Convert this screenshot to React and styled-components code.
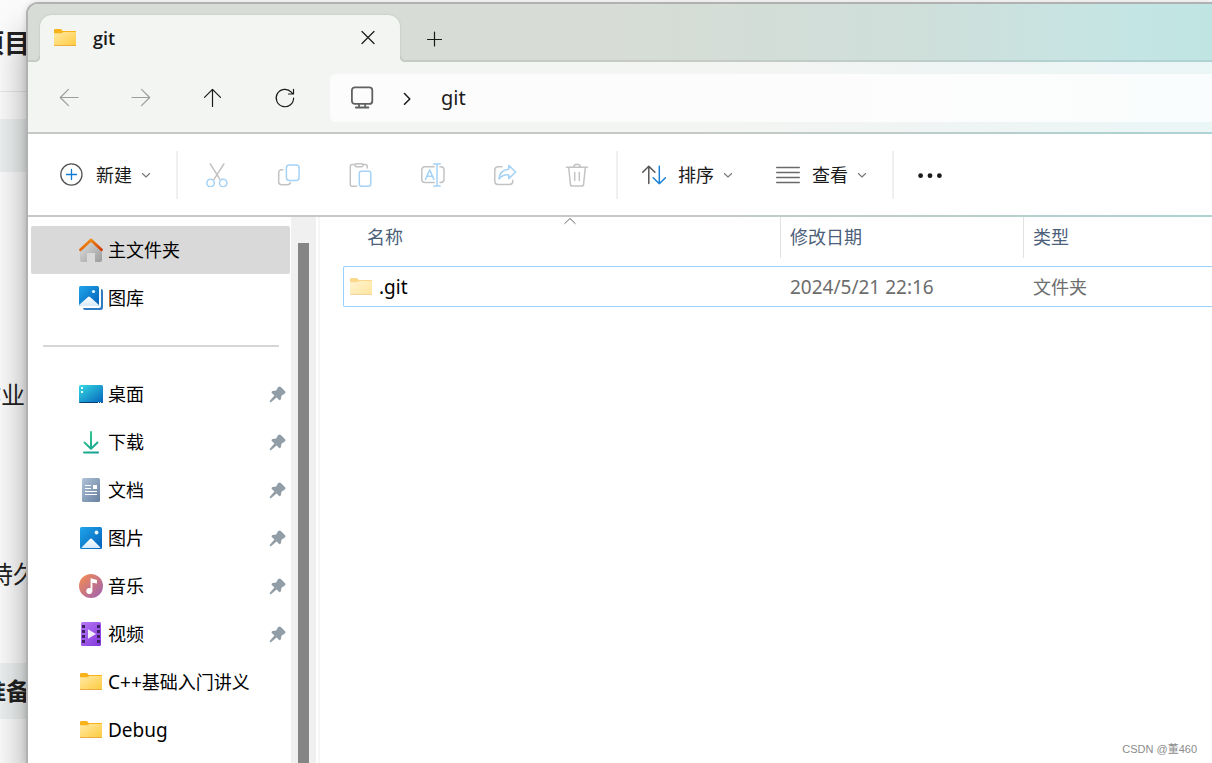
import React from "react";
import styled, { createGlobalStyle, css } from "styled-components";

const Global = createGlobalStyle`
  *, *::before, *::after { box-sizing: border-box; }
  body {
    margin: 0;
    overflow: hidden;
    font-family: "Noto Sans", "Noto Sans CJK SC", sans-serif;
    font-size: 18px;
    line-height: 24px;
    color: #1a1a1a;
  }
`;

const edgeLine =
  "linear-gradient(90deg, #c6cac5 0%, #c6cac5 55%, #bccdc9 76%, #afd2d1 92%, #aed3d2 100%)";

const Desktop = styled.div`
  position: relative;
  height: 100vh;
  padding: 2px 0 0 26px;
  overflow: hidden;
  background: #fbfbfb;
`;

/* The document that shows behind the explorer window */
const BackPage = styled.div`
  position: absolute;
  inset: 0 auto 0 0;
  width: 40px;
  display: flex;
  flex-direction: column;
  overflow: hidden;
`;

const BackRow = styled.div`
  flex: none;
  display: flex;
  align-items: center;
  justify-content: flex-end;
  height: ${(p) => p.$height}px;
  padding: 0 ${(p) => p.$end || 0}px ${(p) => (p.$line ? 6 : 0)}px 0;
  background: ${(p) => (p.$band ? "#edf0f0" : "transparent")};
  border-bottom: ${(p) => (p.$line ? "1px solid #e6e6e6" : "0")};
  font-size: ${(p) => (p.$title ? 26 : 24)}px;
  font-weight: ${(p) => (p.$bold ? 700 : 400)};
  white-space: nowrap;
  color: #222;
`;

const Window = styled.div`
  position: relative;
  height: 100%;
  display: flex;
  flex-direction: column;
  border: 2px solid #b0b1b0;
  border-right: 0;
  border-bottom: 0;
  border-radius: 12px 0 0 0;
  background: #fff;
  box-shadow: 0 30px 36px rgba(0, 0, 0, 0.36), 0 0 6px rgba(0, 0, 0, 0.12);
  overflow: hidden;
`;

const TitleBar = styled.header`
  flex: none;
  display: flex;
  height: 58px;
  padding: 11px 0 0 12px;
  background:
    ${edgeLine} bottom / 100% 2px no-repeat,
    linear-gradient(90deg, #d7dcd6 0%, #d7dcd6 50%, #cfdfda 75%, #c8e3e1 87%, #c3e5e4 94%, #bfe5e3 100%);
`;

const Tab = styled.div`
  position: relative;
  display: flex;
  align-items: center;
  width: 360px;
  padding: 0 16px 2px 13px;
  border-radius: 12px 12px 0 0;
  background: #f3f5f2;
  box-shadow: 0 0 1px 1px #ccd1cb;
  clip-path: inset(-2px -10px 0 -10px);
  font-family: "Open Sans", "Noto Sans CJK SC", sans-serif;
  font-weight: 600;

  &::before, &::after {
    content: "";
    position: absolute;
    bottom: 0;
    width: 6px;
    height: 6px;
  }
  &::before {
    left: -6px;
    background: radial-gradient(circle at 0 0, #d7dcd6 4px, #c6cac5 5px, #c6cac5 6px, #f3f5f2 7px);
  }
  &::after {
    right: -6px;
    background: radial-gradient(circle at 100% 0, #d7dcd6 4px, #c6cac5 5px, #c6cac5 6px, #f3f5f2 7px);
  }
`;

const TabName = styled.span`
  flex: 1;
  padding-left: 16px;
`;

const PlainButton = styled.button`
  display: flex;
  align-items: center;
  justify-content: center;
  padding: 0;
  border: 0;
  background: none;
  font: inherit;
  color: inherit;
`;

const SquareButton = styled(PlainButton)`
  flex: none;
  width: ${(p) => (p.$small ? 32 : 48)}px;
  height: ${(p) => (p.$small ? 32 : 48)}px;
`;

const NewTab = styled(SquareButton)`
  margin-left: 10px;
`;

const NavBar = styled.nav`
  flex: none;
  display: flex;
  gap: 24px;
  height: 72px;
  padding: 12px 0 12px 17px;
  background:
    ${edgeLine} bottom / 100% 2px no-repeat,
    linear-gradient(90deg, #f3f5f2 0%, #f3f5f2 60%, #eff4f4 78%, #ebf6f6 100%);
`;

const Address = styled.div`
  flex: 1;
  display: flex;
  align-items: center;
  margin-left: -3px;
  padding-left: 20px;
  border-radius: 6px 0 0 6px;
  background: linear-gradient(90deg, #fcfcfc 60%, #fbfdfc 86%, #f9fdfe 100%);
  font-size: 20px;
`;

const Crumb = styled(PlainButton)`
  height: 48px;
`;

const CrumbArrow = styled.span`
  display: flex;
  width: 67px;
  justify-content: center;
`;

const ToolBar = styled.div`
  flex: none;
  display: flex;
  align-items: center;
  height: 83px;
  padding: 0 0 2px 20px;
  background: ${edgeLine} bottom / 100% 2px no-repeat, #fff;
`;

const LabelButton = styled(PlainButton)`
  flex: none;
  height: 48px;
  padding: 0 12px;
`;

const ButtonText = styled.span`
  margin: 0 8px 0 12px;
`;

const Divider = styled.div`
  flex: none;
  width: 2px;
  height: 48px;
  margin: 0 12px;
  background: #efefef;
`;

const IconGroup = styled.div`
  flex: none;
  display: flex;
  gap: 24px;
  padding: 0 3px;
`;

const MenuGroup = styled.div`
  flex: none;
  display: flex;
  gap: 18px;
`;

const Body = styled.div`
  flex: 1;
  min-height: 0;
  display: flex;
`;

const Sidebar = styled.aside`
  flex: none;
  width: 263px;
  padding: 9px 1px 0 3px;
  overflow: hidden;
  color: #000;
`;

const Place = styled.a`
  display: flex;
  align-items: center;
  height: 48px;
  padding: 0 4px 0 48px;
  border-radius: 2px;
  color: inherit;
  text-decoration: none;
  ${(p) => p.$active && css`background: #d9d9d9;`}
`;

const PlaceName = styled.span`
  flex: 1;
  padding-left: 5px;
  white-space: nowrap;
`;

const Latin = styled.span`
  font-size: 19px;
`;

const Separator = styled.hr`
  height: 2px;
  margin: 23px 11px 23px 12px;
  border: 0;
  background: #d6d6d6;
`;

const ScrollTrack = styled.div`
  flex: none;
  display: flex;
  width: 25px;
  padding: 26px 7px 0;
  background: #f0f0f0;
`;

const ScrollThumb = styled.div`
  width: 11px;
  background: #858585;
`;

const FilePane = styled.main`
  flex: 1;
  min-width: 0;
  margin-left: 2px;
  padding-left: 23px;
  border-left: 2px solid #f6f6f6;
`;

const FileTable = styled.table`
  width: 100%;
  table-layout: fixed;
  border-collapse: separate;
  border-spacing: 0;
`;

const HeadCell = styled.th`
  position: relative;
  width: ${(p) => p.$width || "auto"};
  padding: 0 0 8px;
  text-align: left;
  font-weight: 400;
  color: #4c607a;
`;

const HeadLabel = styled.div`
  height: 41px;
  padding: 8px 0 0 ${(p) => (p.$first ? 24 : 9)}px;
  border-left: ${(p) => (p.$first ? "0" : "1px solid #e2e2e2")};
`;

const SortMark = styled.span`
  position: absolute;
  top: 0;
  left: 16px;
  right: 0;
  display: flex;
  justify-content: center;
`;

const Cell = styled.td`
  height: 41px;
  padding: 0 0 0 10px;
  border: solid #99d1ff;
  border-width: 1px 0;
  color: #6d6d6d;
  ${(p) => p.$first && css`
    padding-left: 5px;
    border-left-width: 1px;
    border-radius: 2px 0 0 2px;
    color: #000;
  `}
`;

const FileName = styled.div`
  display: flex;
  align-items: center;
  gap: 6px;
`;

const Watermark = styled.div`
  position: absolute;
  right: 15px;
  bottom: 6px;
  font: 11px/16px "Liberation Sans", "Noto Sans CJK SC", sans-serif;
  color: #8c8c8c;
`;

const Svg = ({ w = 24, h = w, children, stroke = "#1a1a1a", sw = 1.5 }) => (
  <svg width={w} height={h} viewBox={`0 0 ${w} ${h}`} fill="none" stroke={stroke} strokeWidth={sw}
    strokeLinecap="round" strokeLinejoin="round" aria-hidden="true">
    {children}
  </svg>
);

const GREY = "#c3c3c3";
const BLUE = "#a5d2f5";

const Back = () => <Svg stroke="#9c9e9b" sw={1.2}><path d="M21 11.500H3.5M11.5 3.300 3.300 11.500l8.200 8.200" /></Svg>;
const Forward = () => <Svg stroke="#9c9e9b" sw={1.2}><path d="M3 11.500h17.5M12.5 3.300l8.200 8.200-8.200 8.200" /></Svg>;
const Up = () => <Svg sw={1.2}><path d="M11.500 20.500V3.300M3.500 11.300l8-8 8 8" /></Svg>;
const Reload = () => <Svg sw={1.2}><path d="M20.600 12a8.700 8.700 0 1 1-2.300-5.900l1.500 1.700M20.500 3.300v4.700h-5" /></Svg>;
const Close = () => <Svg w={16} sw={1.2}><path d="M2 1.500l12 12M14 1.500l-12 12" /></Svg>;
const Plus = () => <Svg w={16} sw={1.2}><path d="M8.500 1v14M1.500 8.500h14" /></Svg>;
const Monitor = () => (
  <Svg stroke="#5f6160" sw={1.8}>
    <rect x="1.9" y="1.300" width="20.400" height="16.600" rx="3" />
    <path d="M9 18v3M15.200 18v3M5.800 21.500h12.600" />
  </Svg>
);
const Chevron = () => <Svg w={12} h={14} sw={1.5}><path d="M2.500 2.500 7.800 8l-5.300 5.300" /></Svg>;
const Caret = () => <Svg w={12} stroke="#777" sw={1.1}><path d="M2.400 4.500 6 8l3.600-3.500" /></Svg>;
const NewIcon = () => (
  <Svg sw={1.3}><circle cx="11.400" cy="11.500" r="10.600" stroke="#555" /><path d="M11.500 6.500v10M6.500 11.500h10" stroke="#0f7ad4" sw={1.600} /></Svg>
);
const Cut = () => (
  <Svg stroke={GREY}>
    <path d="M5.300 1 15 16.400M18.800 1 9 16.400" />
    <g stroke={BLUE}><circle cx="5.600" cy="20" r="3.700" /><circle cx="18.200" cy="20" r="3.700" /></g>
  </Svg>
);
const Copy = () => (
  <Svg stroke={GREY}>
    <path d="M6 6.700H4.700a3 3 0 0 0-3 3v9a3 3 0 0 0 3 3h5.800a3 3 0 0 0 2.900-2.200" />
    <rect x="9.400" y="2" width="12.700" height="15.600" rx="3" stroke={BLUE} />
  </Svg>
);
const Paste = () => (
  <Svg stroke={GREY}>
    <path d="M6.300 2H3.500A1.800 1.800 0 0 0 1.700 3.800v18.200a1.800 1.800 0 0 0 1.800 1.800H8M15 2h1.800a1.800 1.800 0 0 1 1.800 1.800V5.500" transform="translate(-.4 -.5)" />
    <rect x="6" y=".8" width="8" height="3" rx="1.500" />
    <rect x="10.300" y="8.300" width="11.500" height="15" rx="2" stroke={BLUE} />
  </Svg>
);
const Rename = () => (
  <Svg stroke={GREY}>
    <path d="M13.200 3.700H4A3.200 3.200 0 0 0 .8 6.900v9.400a3.200 3.200 0 0 0 3.200 3.200h9.200M19 3.700h.8A3.200 3.200 0 0 1 23 6.900v9.400a3.200 3.200 0 0 1-3.200 3.200H19" />
    <path d="M4.500 16.400 8.700 6.900l4.200 9.500M6 13.200h5.500M16 1v22M12.800 1h6.400M12.800 23h6.400" stroke={BLUE} />
  </Svg>
);
const Share = () => (
  <Svg stroke={GREY}>
    <path d="M9 3.700H5A3.200 3.200 0 0 0 1.800 6.900v11.400A3.200 3.200 0 0 0 5 21.500h11.600a3.200 3.200 0 0 0 3.200-3.200v-1" />
    <path d="M15.800 2.400l6.900 6.600-6.900 6.600v-3.700c-4-.3-7.200.9-9.900 4.100.5-5.500 3.600-9.200 9.900-9.800z" stroke={BLUE} />
  </Svg>
);
const Trash = () => (
  <Svg stroke={GREY}>
    <path d="M1.500 4.300h21M3.700 4.500l1.700 16.600a2 2 0 0 0 2 1.900h9.200a2 2 0 0 0 2-1.900l1.700-16.600M8.600 4a3.500 3.500 0 0 1 6.800 0M9.700 9.500v8M14.300 9.500v8" />
  </Svg>
);
const Sort = () => (
  <Svg stroke="#555">
    <path d="M6.800 20.500V3.300M.7 9.300l6.100-6.100 6.100 6.100" />
    <path d="M17.300 3.300v17.400M11.200 14.700l6.100 6.100 6.100-6.100" stroke="#1b80d6" />
  </Svg>
);
const View = () => <Svg stroke="#6a6a6a" sw={1.4}><path d="M.7 4.500h22.600M.7 9.500h22.600M.7 14.500h22.600M.7 19.500h22.600" /></Svg>;
const More = () => (
  <Svg stroke="none"><g fill="#1a1a1a"><circle cx="2.600" cy="12.700" r="2.400" /><circle cx="12" cy="12.700" r="2.400" /><circle cx="21.400" cy="12.700" r="2.400" /></g></Svg>
);
const SortUp = () => <Svg w={12} h={8} stroke="#666" sw={1}><path d="M.8 6.500 6 1.500l5.200 5" /></Svg>;

const Pin = () => (
  <svg width="17" height="17" viewBox="0 0 17 17" aria-hidden="true">
    <path d="M9 1.300Q10.300-.3 11.800 1l4 3.900q1.400 1.300 0 2.600l-3.300 2.200-.6 3.300q-.6 2.200-2.300.6L7.500 11.500l-4.900 4.300-2 .7.500-2 4.300-4.900-2.200-2.200Q1.700 5.700 3.700 5.100l3.500-.7z" fill="#929ea7" />
  </svg>
);

const Gradients = () => (
  <svg width="0" height="0" style={{ position: "absolute" }} aria-hidden="true">
    <defs>
      <linearGradient id="folder" x1="0" y1="0" x2="1" y2="1"><stop stopColor="#ffe9a6" /><stop offset="1" stopColor="#ffcb3d" /></linearGradient>
      <linearGradient id="roof" x1="0" y1="0" x2="1" y2="1"><stop stopColor="#f99a10" /><stop offset="1" stopColor="#d23f0b" /></linearGradient>
      <linearGradient id="wall" x1="0" y1="0" x2="1" y2="1"><stop stopColor="#e0e0e0" /><stop offset="1" stopColor="#9b9b9b" /></linearGradient>
      <linearGradient id="photo" x1="0" y1="0" x2="1" y2="1"><stop stopColor="#1fa5ea" /><stop offset="1" stopColor="#0560b8" /></linearGradient>
      <linearGradient id="hill" x1="0" y1="0" x2="0" y2="1"><stop stopColor="#fff" /><stop offset="1" stopColor="#d5eafa" /></linearGradient>
      <linearGradient id="screen" x1="0" y1="0" x2="1" y2="1"><stop stopColor="#35dbe2" /><stop offset="1" stopColor="#0562bd" /></linearGradient>
      <linearGradient id="down" gradientUnits="userSpaceOnUse" x1="4" y1="1" x2="20" y2="23"><stop stopColor="#3ed08d" /><stop offset="1" stopColor="#0d9c94" /></linearGradient>
      <linearGradient id="doc" x1="0" y1="0" x2="1" y2="1"><stop stopColor="#b0c3d8" /><stop offset="1" stopColor="#66809f" /></linearGradient>
      <linearGradient id="music" x1="0" y1="0" x2="1" y2="1"><stop offset=".1" stopColor="#f08a58" /><stop offset="1" stopColor="#9b5fb5" /></linearGradient>
      <linearGradient id="video" x1="0" y1="0" x2="1" y2="1"><stop stopColor="#b87af5" /><stop offset="1" stopColor="#8236dc" /></linearGradient>
    </defs>
  </svg>
);

const Folder = ({ faded }) => (
  <Svg stroke="none">
    <g opacity={faded ? 0.5 : 1}>
      <path d="M1 4.200A1.200 1.200 0 0 1 2.200 3h5.600l2 2H23v4H1z" fill="#f9b31a" />
      <path d="M1 7.200h7.500l2-1.200H23v14H1z" fill="url(#folder)" />
      <path d="M1 19.200h22v.8H1z" fill="#e8a33a" />
    </g>
  </Svg>
);
const Home = () => (
  <Svg stroke="none">
    <path d="M3 10 12 2.500 21 10h2v12a2 2 0 0 1-2 2h-5v-9H8v9H3a2 2 0 0 1-2-2V11z" fill="url(#wall)" />
    <path d="M1.500 11.700 12 2l10.500 9.700" stroke="url(#roof)" strokeWidth="2.800" strokeLinejoin="round" />
  </Svg>
);
const Gallery = () => (
  <Svg stroke="none">
    <path d="M22 3a2 2 0 0 1 2 2v16.700a2.300 2.300 0 0 1-2.300 2.300H6a2 2 0 0 1-2-2h16a2 2 0 0 0 2-2z" fill="#2f7cc5" />
    <rect width="20" height="20" rx="1.500" fill="url(#photo)" />
    <path d="M0 19 9 11q1-.9 2 0l9 8q-.5 1-1.500 1h-17Q.3 20 0 19z" fill="url(#hill)" />
    <circle cx="14.500" cy="5.500" r="1.600" fill="#e8f8ff" />
  </Svg>
);
const DesktopIcon = () => (
  <Svg stroke="none">
    <rect y="3" width="24" height="18" rx="1.500" fill="url(#screen)" />
    <path d="M0 20h24q-.3 1-1.500 1h-21Q.3 21 0 20z" fill="#073f76" />
    <path d="M2 5h2v2H2zM2 9h2v2H2zM19 20h1v1h-1zM21 20h1v1h-1z" fill="#e6fbff" />
  </Svg>
);
const Download = () => (
  <Svg stroke="url(#down)" sw={2}>
    <path d="M12.010 2v16M5.500 12.500 12 18.800l6.500-6.300" /><path d="M5 22.500 19 22.600" />
  </Svg>
);
const Doc = () => (
  <Svg stroke="none">
    <rect x="3" width="18" height="24" rx="1.500" fill="url(#doc)" />
    <path d="M6 7h6v1H6zM6 10h6v1H6zM6 13h12v1H6zM6 16h12v1H6zM14 7h4v4h-4z" fill="#fff" />
  </Svg>
);
const Picture = () => (
  <Svg stroke="none">
    <rect x="1" y="1" width="22" height="22" rx="1.500" fill="url(#photo)" />
    <path d="M2.500 21.600 11 13q1-1 2 0l8.500 8.600q-.5.500-1 .5h-17z" fill="url(#hill)" />
    <circle cx="17.500" cy="6.500" r="1.900" fill="#e8f8ff" />
  </Svg>
);
const Music = () => (
  <Svg stroke="none">
    <circle cx="12" cy="12" r="12" fill="url(#music)" />
    <path d="M11.600 4.300 18 6v3.500l-4.600-.7v8a3.100 3.100 0 1 1-1.800-2.600z" fill="#fff" />
  </Svg>
);
const Video = () => (
  <Svg stroke="none">
    <rect x="2" width="20" height="24" rx="1.500" fill="url(#video)" />
    <path d="M3 3h3v3H3zM3 8h3v3H3zM3 13h3v3H3zM3 18h3v3H3zM18 3h3v3h-3zM18 8h3v3h-3zM18 13h3v3h-3zM18 18h3v3h-3z" fill="#3d2266" />
    <path d="M9 7.200v9.600l8-4.800z" fill="#f4ecff" />
  </Svg>
);

const tools = [
  ["剪切", Cut], ["复制", Copy], ["粘贴", Paste], ["重命名", Rename], ["共享", Share], ["删除", Trash],
];

const library = [
  ["主文件夹", Home, false, true],
  ["图库", Gallery, false, false],
];

const places = [
  ["桌面", DesktopIcon, true],
  ["下载", Download, true],
  ["文档", Doc, true],
  ["图片", Picture, true],
  ["音乐", Music, true],
  ["视频", Video, true],
  [<><Latin>C++</Latin>基础入门讲义</>, Folder, false],
  [<Latin>Debug</Latin>, Folder, false],
];

const PlaceRow = ({ name, Icon, pinned, active }) => (
  <Place href="#" $active={active}>
    <Icon />
    <PlaceName>{name}</PlaceName>
    {pinned && <Pin />}
  </Place>
);

const MenuButton = ({ Icon, label }) => (
  <LabelButton type="button">
    <Icon />
    <ButtonText>{label}</ButtonText>
    <Caret />
  </LabelButton>
);

export default function App() {
  return (
    <Desktop>
      <Global />
      <Gradients />
      <BackPage>
        <BackRow $height={92} $end={10} $title $bold $line>项目</BackRow>
        <BackRow $height={27} />
        <BackRow $height={53} $band />
        <BackRow $height={72} />
        <BackRow $height={302} $end={15}>作业</BackRow>
        <BackRow $height={56} $end={3}>持久</BackRow>
        <BackRow $height={61} />
        <BackRow $height={56} $end={10} $bold $band>准备</BackRow>
      </BackPage>
      <Window>
        <TitleBar>
          <Tab>
            <Folder />
            <TabName>git</TabName>
            <SquareButton type="button" $small aria-label="关闭标签页"><Close /></SquareButton>
          </Tab>
          <NewTab type="button" aria-label="新建标签页"><Plus /></NewTab>
        </TitleBar>
        <NavBar>
          <SquareButton type="button" aria-label="后退"><Back /></SquareButton>
          <SquareButton type="button" aria-label="前进"><Forward /></SquareButton>
          <SquareButton type="button" aria-label="向上"><Up /></SquareButton>
          <SquareButton type="button" aria-label="刷新"><Reload /></SquareButton>
          <Address>
            <Crumb type="button" aria-label="此电脑"><Monitor /></Crumb>
            <CrumbArrow><Chevron /></CrumbArrow>
            <Crumb type="button">git</Crumb>
          </Address>
        </NavBar>
        <ToolBar>
          <MenuButton Icon={NewIcon} label="新建" />
          <Divider />
          <IconGroup>
            {tools.map(([label, Icon]) => (
              <SquareButton key={label} type="button" aria-label={label}><Icon /></SquareButton>
            ))}
          </IconGroup>
          <Divider />
          <MenuGroup>
            <MenuButton Icon={Sort} label="排序" />
            <MenuButton Icon={View} label="查看" />
          </MenuGroup>
          <Divider />
          <SquareButton type="button" aria-label="更多"><More /></SquareButton>
        </ToolBar>
        <Body>
          <Sidebar>
            {library.map(([name, Icon, pinned, active]) => (
              <PlaceRow key={name} name={name} Icon={Icon} pinned={pinned} active={active} />
            ))}
            <Separator />
            {places.map(([name, Icon, pinned], i) => (
              <PlaceRow key={i} name={name} Icon={Icon} pinned={pinned} />
            ))}
          </Sidebar>
          <ScrollTrack><ScrollThumb /></ScrollTrack>
          <FilePane>
            <FileTable>
              <thead>
                <tr>
                  <HeadCell $width="437px">
                    <HeadLabel $first>名称</HeadLabel>
                    <SortMark><SortUp /></SortMark>
                  </HeadCell>
                  <HeadCell $width="243px"><HeadLabel>修改日期</HeadLabel></HeadCell>
                  <HeadCell><HeadLabel>类型</HeadLabel></HeadCell>
                </tr>
              </thead>
              <tbody>
                <tr>
                  <Cell $first><FileName><Folder faded /><Latin>.git</Latin></FileName></Cell>
                  <Cell><Latin>2024/5/21 22:16</Latin></Cell>
                  <Cell>文件夹</Cell>
                </tr>
              </tbody>
            </FileTable>
          </FilePane>
        </Body>
      </Window>
      <Watermark>CSDN @董460</Watermark>
    </Desktop>
  );
}
